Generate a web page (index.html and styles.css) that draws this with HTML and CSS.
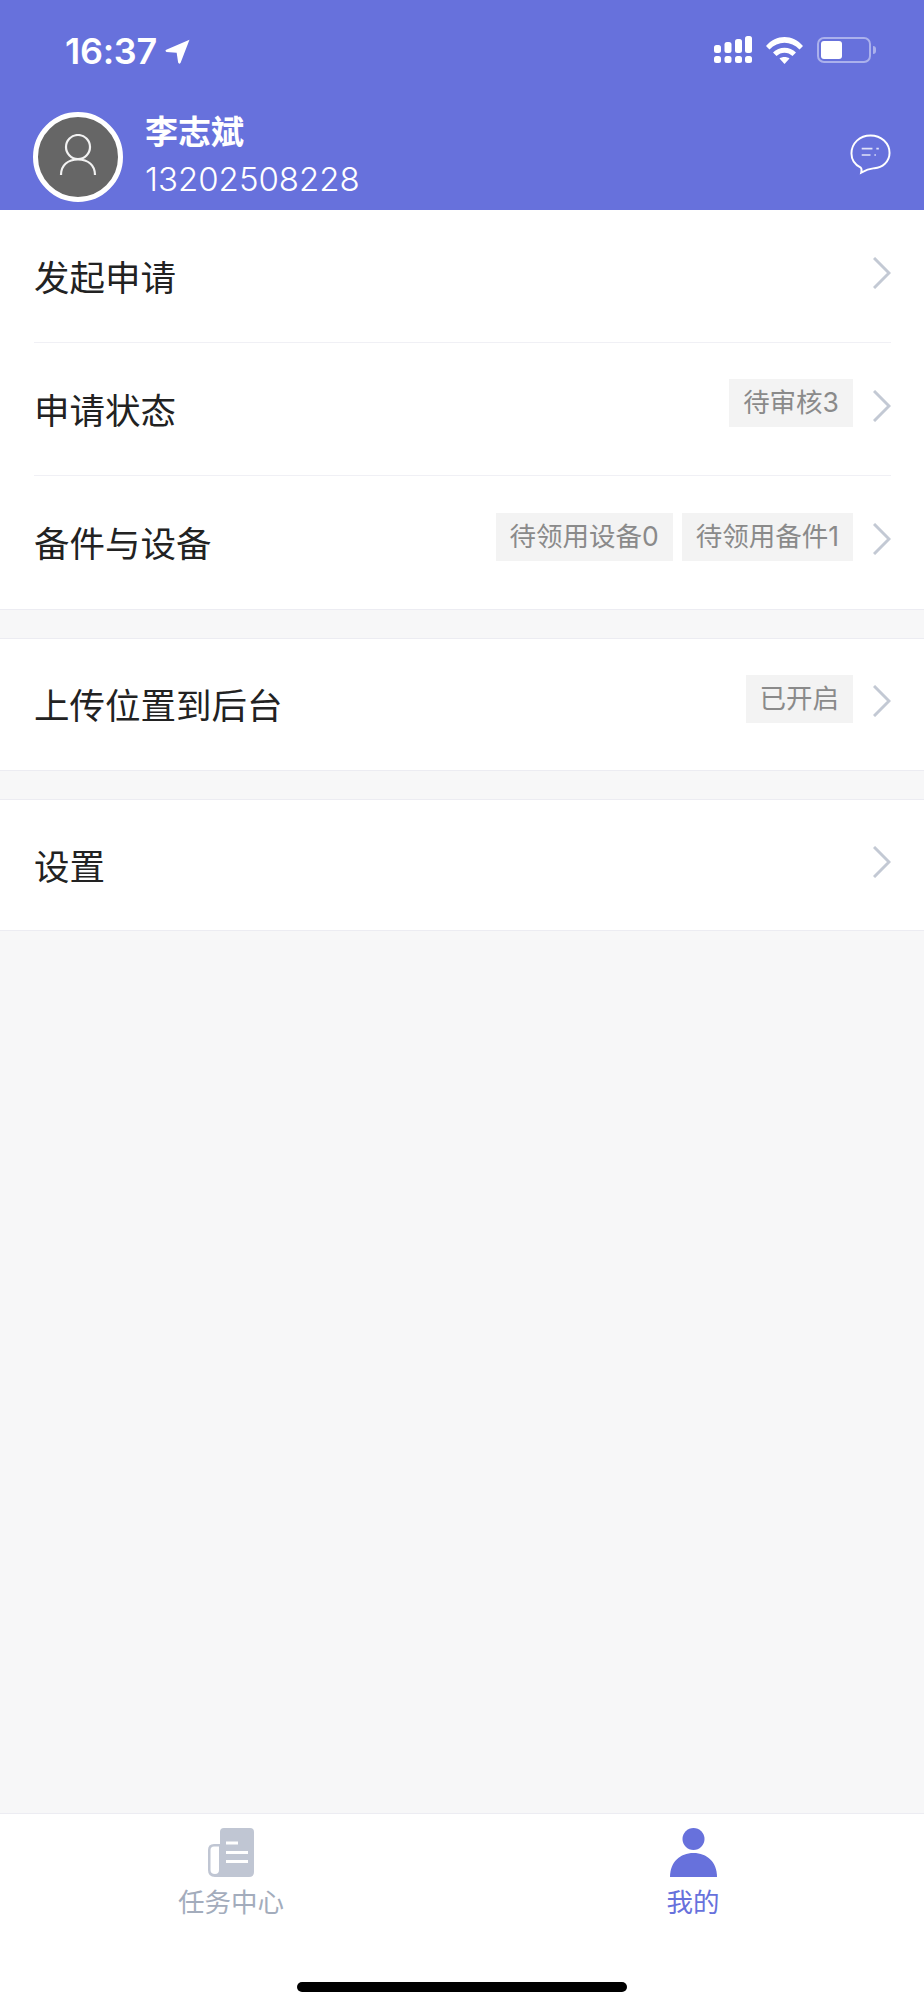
FILE: index.html
```html
<!DOCTYPE html>
<html lang="zh-CN">
<head>
    <meta charset="UTF-8">
    <meta name="viewport" content="width=device-width, initial-scale=1.0">
    <title>我的</title>
    <link rel="stylesheet" href="styles.css">
</head>
<body>

    <div class="header">
        <div class="status-bar">
            <div class="status-left">
                <span class="time">16:37</span>
                <svg class="location" width="25" height="25" viewBox="0 0 24 24"><path d="M23.500 0.600 L15 22.800 Q13.600 24.600 12.600 22.600 L11.200 13.200 L1.400 12.400 Q-0.400 11.400 1.200 10.200 Z" fill="#fff"/></svg>
            </div>
            <div class="status-right">
                <svg width="38" height="27" viewBox="0 0 38 27" fill="#fff">
                    <rect x="0" y="9" width="7" height="8" rx="2.5"/>
                    <rect x="10.500" y="6" width="7" height="11" rx="2.5"/>
                    <rect x="21" y="3" width="7" height="14" rx="2.5"/>
                    <rect x="31" y="0" width="7" height="17" rx="2.5"/>
                    <rect x="0" y="20" width="7" height="7" rx="2.5"/>
                    <rect x="10.500" y="20" width="7" height="7" rx="2.5"/>
                    <rect x="21" y="20" width="7" height="7" rx="2.5"/>
                    <rect x="31" y="20" width="7" height="7" rx="2.500"/>
                </svg>
                <svg class="wifi" width="37" height="27" viewBox="0 0 37 27" fill="#fff">
                    <path d="M0 9 C10 -3 27 -3 37 9 L33.500 12.500 C25 3.500 12 3.500 3.500 12.500 Z"/>
                    <path d="M7 15.500 C13 9 24 9 30 15.500 L26.500 19 C22 14.500 15 14.500 10.500 19 Z"/>
                    <path d="M13.500 21.500 C16 19.500 21 19.500 23.500 21.500 L18.500 27 Z"/>
                </svg>
                <div class="battery">
                    <div class="battery-body"><div class="battery-level"></div></div>
                    <div class="battery-nub"></div>
                </div>
            </div>
        </div>
        <div class="user-row">
            <div class="avatar">
                <svg width="38" height="42" viewBox="0 0 38 42" fill="none" stroke="#f2f2f2" stroke-width="2.200">
                    <circle cx="19" cy="13" r="12"/>
                    <path d="M2 41 C2 31 9 25.500 19 25.500 C29 25.500 36 31 36 41"/>
                </svg>
            </div>
            <div class="user-info">
                <div class="user-name">李志斌</div>
                <div class="user-phone">13202508228</div>
            </div>
            <svg class="chat" width="41" height="42" viewBox="0 0 42 42" fill="none" stroke="#fff">
                <path d="M11 35 C5 32 1.500 27 1.500 20.500 C1.500 10 10 2 21 2 C32 2 40.500 10 40.500 20 C40.500 29 33 35 25 35.500 C21 36 15 38 11.500 40 C12 38 12 36 11 35 Z" stroke-width="2"/>
                <path d="M12 15.500 H23 M27 15.500 H29.500 M12 22 H21 M25 22 H26.500" stroke-width="1.700" stroke-opacity="0.800"/>
            </svg>
        </div>
    </div>

    <div class="content">
        <div class="group">
            <div class="row">
                <span class="row-title">发起申请</span>
                <svg class="arrow" width="18" height="32" viewBox="0 0 18 32" fill="none" stroke="#c3c9d4" stroke-width="3"><path d="M1 1 L16 16 L1 31"/></svg>
            </div>
            <div class="row">
                <span class="row-title">申请状态</span>
                <span class="tag">待审核3</span>
                <svg class="arrow" width="18" height="32" viewBox="0 0 18 32" fill="none" stroke="#c3c9d4" stroke-width="3"><path d="M1 1 L16 16 L1 31"/></svg>
            </div>
            <div class="row">
                <span class="row-title">备件与设备</span>
                <span class="tag">待领用设备0</span>
                <span class="tag">待领用备件1</span>
                <svg class="arrow" width="18" height="32" viewBox="0 0 18 32" fill="none" stroke="#c3c9d4" stroke-width="3"><path d="M1 1 L16 16 L1 31"/></svg>
            </div>
        </div>
        <div class="group">
            <div class="row">
                <span class="row-title">上传位置到后台</span>
                <span class="tag">已开启</span>
                <svg class="arrow" width="18" height="32" viewBox="0 0 18 32" fill="none" stroke="#c3c9d4" stroke-width="3"><path d="M1 1 L16 16 L1 31"/></svg>
            </div>
        </div>
        <div class="group group-last">
            <div class="row">
                <span class="row-title">设置</span>
                <svg class="arrow" width="18" height="32" viewBox="0 0 18 32" fill="none" stroke="#c3c9d4" stroke-width="3"><path d="M1 1 L16 16 L1 31"/></svg>
            </div>
        </div>
    </div>

    <div class="tabbar">
        <div class="tabs">
            <div class="tab">
                <svg width="46" height="49" viewBox="0 0 46 49">
                    <path d="M12 4 Q12 0 16 0 H42 Q46 0 46 4 V44 Q46 49 41 49 H7 Q0 49 0 42 V22 Q0 16 6 16 H12 Z M6 18.500 Q2.500 18.500 2.500 22 V42 Q2.500 46 7 46 Q11 46 11 42 V18.500 Z" fill="#c0c6d3" fill-rule="evenodd"/>
                    <path d="M18 15 H30 M18 24.500 H40 M18 33.500 H40" stroke="#fff" stroke-width="3" fill="none"/>
                </svg>
                <span class="tab-label">任务中心</span>
            </div>
            <div class="tab active">
                <svg width="47" height="49" viewBox="0 0 47 49" fill="#6771dc">
                    <circle cx="23.500" cy="11" r="11"/>
                    <path d="M0 49 C0 34 10 25 23.500 25 C37 25 47 34 47 49 Z"/>
                </svg>
                <span class="tab-label">我的</span>
            </div>
        </div>
        <div class="home-indicator"></div>
    </div>

</body>
</html>
```

FILE: styles.css
```css
* {
    margin: 0;
    padding: 0;
    box-sizing: border-box;
}
body {
    font-family: Inter, "Noto Sans CJK SC", sans-serif;
    background-color: #f7f7f8;
    height: 2000px;
    display: flex;
    flex-direction: column;
    overflow: hidden;
}
.header {
    background-color: #6771dc;
    color: white;
    height: 210px;
    flex-shrink: 0;
}
.status-bar {
    height: 112px;
    padding: 36px 48px 0 65px;
    display: flex;
    justify-content: space-between;
    align-items: flex-start;
}
.status-left {
    display: flex;
    align-items: center;
    height: 30px;
}
.time {
    font-size: 36px;
    font-weight: 600;
    letter-spacing: -0.3px;
    line-height: 30px;
}
.location {
    margin-left: 8px;
}
.status-right {
    display: flex;
    align-items: flex-start;
}
.wifi {
    margin-left: 14px;
    margin-top: 1px;
}
.battery {
    display: flex;
    align-items: center;
    margin-left: 14px;
    margin-top: 1px;
}
.battery-body {
    width: 54px;
    height: 26px;
    border: 2px solid rgba(255, 255, 255, 0.45);
    border-radius: 7px;
    padding: 2px;
}
.battery-level {
    width: 21px;
    height: 18px;
    background-color: white;
    border-radius: 3px;
}
.battery-nub {
    width: 3px;
    height: 8px;
    margin-left: 2px;
    background-color: rgba(255, 255, 255, 0.45);
    border-radius: 0 3px 3px 0;
}
.user-row {
    display: flex;
    align-items: flex-start;
    padding: 0 33px 0 33px;
}
.avatar {
    width: 90px;
    height: 90px;
    border-radius: 50%;
    border: 5px solid white;
    background-color: #666;
    display: flex;
    align-items: center;
    justify-content: center;
    padding-bottom: 4px;
}
.user-info {
    margin-left: 22px;
    flex: 1;
}
.user-name {
    font-size: 33px;
    font-weight: 700;
    line-height: 40px;
}
.user-phone {
    font-size: 33px;
    font-weight: 300;
    line-height: 50px;
    margin-top: 2px;
}
.chat {
    margin-top: 21px;
}
.content {
    flex: 1;
}
.group {
    background-color: white;
    border-bottom: 1px solid #ececf2;
    margin-bottom: 28px;
}
.group + .group {
    border-top: 1px solid #ececf2;
}
.row {
    height: 133px;
    margin: 0 33px 0 34px;
    display: flex;
    align-items: center;
    border-bottom: 1px solid #f0f0f5;
}
.row:last-child {
    border-bottom: none;
}
.group + .group .row {
    height: 131px;
}
.group-last .row {
    height: 130px;
}
.group + .group-last .row {
    height: 130px;
}
.row-title {
    font-size: 35.500px;
    color: #222;
    flex: 1;
    margin-bottom: 2px;
}
.tag {
    background-color: #f3f3f3;
    color: #8a8a8a;
    font-size: 26.500px;
    height: 48px;
    line-height: 47px;
    padding: 0 14px;
    margin-left: 9px;
    margin-bottom: 12px;
}
.arrow {
    margin-left: 20px;
    margin-bottom: 7px;
}
.tabbar {
    background-color: white;
    border-top: 1px solid #ececf2;
    height: 187px;
    flex-shrink: 0;
    display: flex;
    flex-direction: column;
    align-items: center;
}
.tabs {
    display: flex;
    width: 100%;
    padding-top: 14px;
}
.tab {
    flex: 1;
    display: flex;
    flex-direction: column;
    align-items: center;
}
.tab-label {
    font-size: 26.500px;
    line-height: 36px;
    margin-top: 7px;
    color: #a3acbc;
}
.tab.active .tab-label {
    color: #6771dc;
}
.home-indicator {
    width: 330px;
    height: 10px;
    margin-top: 62px;
    background-color: black;
    border-radius: 5px;
}
```
